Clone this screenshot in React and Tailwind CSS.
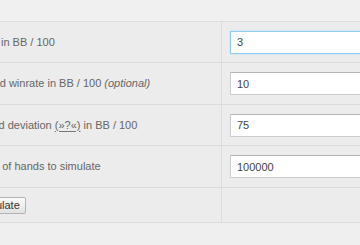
const ROWS = [
  { id: 'winrate', label: <>Winrate in BB / 100</>, value: '3', focused: true },
  {
    id: 'expected',
    label: (
      <>
        Expected winrate in BB / 100 <i>(optional)</i>
      </>
    ),
    value: '10',
  },
  {
    id: 'stddev',
    label: (
      <>
        Standard deviation <span className="underline decoration-[#777] underline-offset-2">(»?«)</span> in BB / 100
      </>
    ),
    value: '75',
  },
  { id: 'hands', label: <>Number of hands to simulate</>, value: '100000' },
];

function FieldRow({ row, tall }) {
  return (
    <div className={`flex border-b border-[#dcdcdc] ${tall ? 'h-[42px]' : 'h-[41px]'}`}>
      <div className="flex w-[270px] shrink-0 items-center border-r border-[#dcdcdc] pl-[8px] text-[11px] text-[#666]">
        <span className="whitespace-nowrap">{row.label}</span>
      </div>
      <div className="flex items-center pl-[8px]">
        <input
          type="text"
          defaultValue={row.value}
          className={`h-[23px] w-[160px] bg-white px-[6px] text-[11px] text-[#444] outline-none ${
            row.focused
              ? 'border border-[#8fcdf2] shadow-[0_0_2px_#b9e0f7]'
              : 'border border-[#cccccc] border-t-[#b5b5b5]'
          }`}
        />
      </div>
    </div>
  );
}

export default function App() {
  return (
    <div className="h-[245px] w-[360px] overflow-hidden bg-[#efefef] font-['Liberation_Sans',Arial,sans-serif]">
      <div className="-ml-[48px] w-[460px]">
        <div className="h-[22px] border-b border-[#dcdcdc] bg-[#f0f0f0]" />
        <div className="bg-[#ececec]">
          {ROWS.map((row, i) => (
            <FieldRow key={row.id} row={row} tall={i % 2 === 1} />
          ))}
          <div className="flex h-[35px] border-b border-[#dcdcdc]">
            <div className="flex w-[270px] shrink-0 items-center border-r border-[#dcdcdc] pl-[19px]">
              <button
                type="button"
                className="h-[17px] rounded-[2px] border border-[#b4b4b4] bg-gradient-to-b from-[#fafafa] to-[#e2e2e2] px-[5px] text-[11px] leading-none text-[#333]"
              >
                Simulate
              </button>
            </div>
            <div />
          </div>
        </div>
      </div>
    </div>
  );
}
